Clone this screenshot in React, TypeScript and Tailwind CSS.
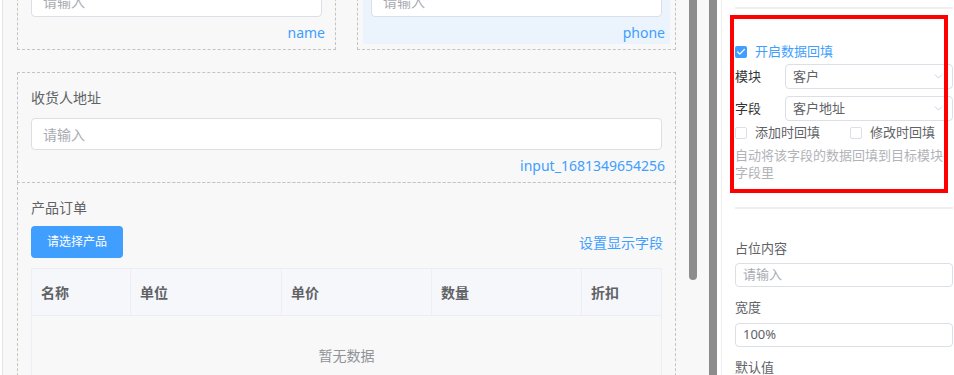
import { ChevronDown, Check } from 'lucide-react';

const font = { fontFamily: '"Noto Sans", "Noto Sans CJK SC", sans-serif' };

function FieldBox({ label, field, placeholder, active, className = '' }: { label: string; field: string; placeholder: string; active?: boolean; className?: string }) {
  return (
    <div className={`border border-dashed border-[#c4c4c4] p-[5px] ${className}`}>
      <div className={`px-[8px] pt-[10px] pb-[1px] ${active ? 'bg-[#ebf4fd]' : ''}`}>
        <div className="h-[20px] text-[14px] leading-[20px] text-[#606266]">{label}</div>
        <div className="mt-[10px] flex h-[32px] items-center rounded-[4px] border border-[#dcdfe6] bg-white px-[11px] text-[14px] text-[#a8abb2]">
          {placeholder}
        </div>
        <div className="mt-[6px] -mr-[3px] text-right text-[14px] leading-[20px] text-[#409eff]">{field}</div>
      </div>
    </div>
  );
}

function SmallCheck({ checked }: { checked?: boolean }) {
  return checked ? (
    <span className="flex h-[12px] w-[12px] items-center justify-center rounded-[2px] bg-[#409eff]">
      <Check className="h-[10px] w-[10px] text-white" strokeWidth={3} />
    </span>
  ) : (
    <span className="h-[12px] w-[12px] rounded-[2px] border border-[#dcdfe6] bg-white" />
  );
}

export default function App() {
  const cols = [
    { name: '名称', w: 'w-[99px]' },
    { name: '单位', w: 'w-[151px]' },
    { name: '单价', w: 'w-[150px]' },
    { name: '数量', w: 'w-[150px]' },
    { name: '折扣', w: 'flex-1' },
  ];

  return (
    <div className="relative flex h-[375px] w-[954px] overflow-hidden bg-white" style={font}>
      {/* canvas */}
      <div className="flex w-[689px] shrink-0 bg-[#f8f8f8]">
        <div className="w-[2px] bg-white" />
        <div className="w-px bg-[#e4e4ec]" />
        <div className="flex-1 pl-[14px] pr-[13px]">
          <div className="-mt-[61px] grid grid-cols-2 gap-[21px]">
            <FieldBox label="客户名称" field="name" placeholder="请输入" />
            <FieldBox label="联系电话" field="phone" placeholder="请输入" active />
          </div>

          <FieldBox className="mt-[22px]" label="收货人地址" field="input_1681349654256" placeholder="请输入" />

          {/* product order */}
          <div className="-mt-px h-[300px] border border-dashed border-[#c4c4c4] p-[5px]">
            <div className="px-[8px] pt-[10px]">
              <div className="h-[20px] text-[14px] leading-[20px] text-[#606266]">产品订单</div>
              <div className="mt-[8px] flex items-center justify-between">
                <button className="h-[32px] w-[92px] rounded-[4px] bg-[#409eff] text-[12px] text-white">请选择产品</button>
                <span className="-mr-px text-[14px] text-[#409eff]">设置显示字段</span>
              </div>
              <div className="mt-[10px] border border-[#ebeef5]">
                <div className="flex h-[47px] border-b border-[#ebeef5] bg-[#f5f7fa]">
                  {cols.map((c, i) => (
                    <div
                      key={c.name}
                      className={`${c.w} flex items-center px-[9px] text-[14px] font-bold text-[#606266] ${i < cols.length - 1 ? 'border-r border-[#ebeef5]' : ''}`}
                    >
                      {c.name}
                    </div>
                  ))}
                </div>
                <div className="flex h-[78px] items-center justify-center text-[14px] text-[#909399]">暂无数据</div>
              </div>
            </div>
          </div>
        </div>
      </div>

      {/* scrollbars */}
      <div className="flex w-[8px] shrink-0 flex-col bg-[#f8f8f8]">
        <div className="h-[280px] rounded-b-[4px] bg-[#8c8c8c]" />
      </div>
      <div className="w-[12px] shrink-0 bg-[#f8f8f8]" />
      <div className="w-[8px] shrink-0 bg-[#8c8c8c]" />
      <div className="w-[4px] shrink-0 bg-white" />

      {/* right panel */}
      <div className="flex-1 border-l border-[#eeeeee] pl-[13px] text-[13px] text-[#606266]">
        <div className="w-[218px]">
          <div className="mt-[7px] h-[2px] bg-[#efefef]" />

          <div className="mt-[33px] flex h-[20px] items-center gap-[8px]">
            <SmallCheck checked />
            <span className="text-[#409eff]">开启数据回填</span>
          </div>

          <div className="mt-[2px] flex h-[25px] items-center">
            <span className="w-[50px] text-[#333]">模块</span>
            <div className="flex h-[25px] flex-1 items-center justify-between rounded-[4px] border border-[#dcdfe6] bg-white pl-[7px] pr-[7px] text-[#606266]">
              客户
              <ChevronDown className="h-[13px] w-[13px] text-[#c0c4cc]" strokeWidth={1.5} />
            </div>
          </div>

          <div className="mt-[7px] flex h-[25px] items-center">
            <span className="w-[50px] text-[#333]">字段</span>
            <div className="flex h-[25px] flex-1 items-center justify-between rounded-[4px] border border-[#dcdfe6] bg-white pl-[7px] pr-[7px] text-[#606266]">
              客户地址
              <ChevronDown className="h-[13px] w-[13px] text-[#c0c4cc]" strokeWidth={1.5} />
            </div>
          </div>

          <div className="mt-[2px] flex h-[20px] items-center">
            <div className="flex w-[115px] items-center gap-[8px]">
              <SmallCheck />
              <span>添加时回填</span>
            </div>
            <div className="flex items-center gap-[8px]">
              <SmallCheck />
              <span>修改时回填</span>
            </div>
          </div>

          <p className="mt-[4px] leading-[17px] text-[#b1b3b8]">自动将该字段的数据回填到目标模块字段里</p>

          <div className="mt-[26px] h-[2px] bg-[#efefef]" />

          <div className="mt-[29px] leading-[20px]">占位内容</div>
          <div className="mt-[5px] flex h-[24px] items-center rounded-[4px] border border-[#dcdfe6] px-[7px] text-[#a8abb2]">请输入</div>

          <div className="mt-[10px] leading-[20px]">宽度</div>
          <div className="mt-[6px] flex h-[24px] items-center rounded-[4px] border border-[#dcdfe6] px-[7px]">100%</div>

          <div className="mt-[10px] leading-[20px]">默认值</div>
        </div>
      </div>

      {/* annotation outline */}
      <div className="absolute left-[730px] top-[15px] h-[178px] w-[218px] border-[4px] border-[#ff0000]" />
    </div>
  );
}
